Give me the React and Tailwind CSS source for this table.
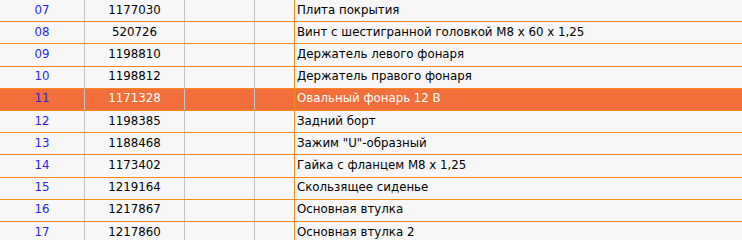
const ROWS = [
  ['07', '1177030', 'Плита покрытия'],
  ['08', '520726', 'Винт с шестигранной головкой M8 x 60 x 1,25'],
  ['09', '1198810', 'Держатель левого фонаря'],
  ['10', '1198812', 'Держатель правого фонаря'],
  ['11', '1171328', 'Овальный фонарь 12 В'],
  ['12', '1198385', 'Задний борт'],
  ['13', '1188468', 'Зажим "U"-образный'],
  ['14', '1173402', 'Гайка с фланцем M8 x 1,25'],
  ['15', '1219164', 'Скользящее сиденье'],
  ['16', '1217867', 'Основная втулка'],
  ['17', '1217860', 'Основная втулка 2'],
];

const SELECTED = '11';

function PartRow({ pos, code, name }) {
  const active = pos === SELECTED;
  return (
    <div
      className={`grid grid-cols-[85px_100px_70px_40px_1fr] h-[22.2px] border-b border-[#f7891f] ${
        active ? 'bg-[#f26e3a] text-white' : 'text-black'
      }`}
    >
      <div className="border-r border-[#c4c4c4] flex items-center justify-center text-[#2a1fee]">{pos}</div>
      <div className="border-r border-[#c4c4c4] flex items-center justify-center">{code}</div>
      <div className="border-r border-[#c4c4c4]" />
      <div className="border-r border-[#f7891f]" />
      <div className="flex items-center pl-[2px] whitespace-nowrap overflow-hidden">{name}</div>
    </div>
  );
}

export default function App() {
  return (
    <div
      className="w-[742px] h-[240px] overflow-hidden bg-[#f7f7f7] text-[11.8px] leading-none"
      style={{ fontFamily: '"DejaVu Sans", Verdana, sans-serif' }}
    >
      {ROWS.map(([pos, code, name]) => (
        <PartRow key={pos} pos={pos} code={code} name={name} />
      ))}
    </div>
  );
}
